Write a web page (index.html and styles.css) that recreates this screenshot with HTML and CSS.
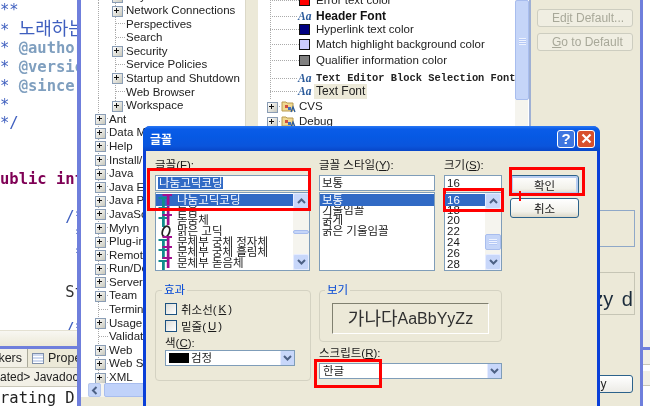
FILE: index.html
```html
<!DOCTYPE html>
<html lang="ko">
<head>
<meta charset="utf-8">
<title>글꼴</title>
<link rel="stylesheet" href="styles.css">
</head>
<body>
<svg class="defs" width="0" height="0" aria-hidden="true">
  <symbol id="tt" viewBox="0 0 15 13">
    <path d="M0.500 3h9.500v2H6.800V13H4V5H0.500z" fill="#108c8c"/>
    <path d="M4.500 0H14v2h-2.500V11H8.800V2H4.500z" fill="#a01090"/>
  </symbol>
  <symbol id="oo" viewBox="0 0 15 13">
    <ellipse cx="8" cy="6.500" rx="3.500" ry="5.500" transform="rotate(18 8 6.500)" fill="none" stroke="#222" stroke-width="1.800"/>
  </symbol>
  <symbol id="up" viewBox="0 0 9 6"><path d="M1 5l3.500-3.500L8 5" fill="none" stroke="#4d6185" stroke-width="2"/></symbol>
  <symbol id="down" viewBox="0 0 9 6"><path d="M1 1l3.500 3.500L8 1" fill="none" stroke="#4d6185" stroke-width="2"/></symbol>
  <symbol id="folder" viewBox="0 0 15 14">
    <path d="M1 3h4l1 1h6v8H1z" fill="#f0d890" stroke="#b89a50"/>
    <rect x="4" y="6" width="3" height="3" fill="#d05040"/>
    <rect x="7" y="8" width="3" height="3" fill="#4070c0"/>
    <path d="M10 13l2-5 2 5" fill="none" stroke="#2a5a9a" stroke-width="1.300"/>
  </symbol>
</svg>

<div class="screen">
  <div class="workbench">
    <pre class="editor"><span class="doc">**</span>
<span class="doc">* <span class="ko">노래하는</span></span>
<span class="doc">* <b class="tag">@author</b></span>
<span class="doc">* <b class="tag">@version</b></span>
<span class="doc">* <b class="tag">@since</b></span>
<span class="doc">*</span>
<span class="doc">*/</span>


<b class="kw">ublic int</b>

<span class="doc">       /*</span>
<span class="doc">        *</span>
<span class="doc">        *</span>

<span class="code">       St</span>

<span class="doc">       /*</span></pre>
    <div class="editor-scroll"></div>
    <div class="tabs">
      <span class="tab">kers</span>
      <span class="tab tab-props"><i class="tab-icon"></i>Prope</span>
    </div>
    <div class="crumb">ated&gt; Javadoc</div>
    <pre class="console">rating D:</pre>
  </div>

  <div class="prefs">
    <div class="tree-one">
      <div class="row nested"><i class="node exp"></i>Keys</div>
      <div class="row nested"><i class="node exp"></i>Network Connections</div>
      <div class="row nested"><i class="node"></i>Perspectives</div>
      <div class="row nested"><i class="node"></i>Search</div>
      <div class="row nested"><i class="node exp"></i>Security</div>
      <div class="row nested"><i class="node"></i>Service Policies</div>
      <div class="row nested"><i class="node exp"></i>Startup and Shutdown</div>
      <div class="row nested"><i class="node"></i>Web Browser</div>
      <div class="row nested"><i class="node exp"></i>Workspace</div>
      <div class="row"><i class="node exp"></i>Ant</div>
      <div class="row"><i class="node exp"></i>Data Management</div>
      <div class="row"><i class="node exp"></i>Help</div>
      <div class="row"><i class="node exp"></i>Install/Update</div>
      <div class="row"><i class="node exp"></i>Java</div>
      <div class="row"><i class="node exp"></i>Java EE</div>
      <div class="row"><i class="node exp"></i>Java Persistence</div>
      <div class="row"><i class="node exp"></i>JavaScript</div>
      <div class="row"><i class="node exp"></i>Mylyn</div>
      <div class="row"><i class="node exp"></i>Plug-in Development</div>
      <div class="row"><i class="node exp"></i>Remote Systems</div>
      <div class="row"><i class="node exp"></i>Run/Debug</div>
      <div class="row"><i class="node exp"></i>Server</div>
      <div class="row"><i class="node exp"></i>Team</div>
      <div class="row"><i class="node"></i>Terminal</div>
      <div class="row"><i class="node exp"></i>Usage Data</div>
      <div class="row"><i class="node"></i>Validation</div>
      <div class="row"><i class="node exp"></i>Web</div>
      <div class="row"><i class="node exp"></i>Web Services</div>
      <div class="row"><i class="node exp"></i>XML</div>
      <div class="hscroll"><span class="hbtn"><svg width="7" height="9" viewBox="0 0 6 9"><path d="M5 1L1.500 4.500 5 8" fill="none" stroke="#4d6185" stroke-width="2"/></svg></span><span class="hthumb"></span></div>
    </div>
    <div class="sash"></div>
    <div class="tree-two">
      <div class="item first"><i class="link"></i><i class="swatch red"></i>Error text color</div>
      <div class="item gap16"><i class="link short"></i><i class="aa">Aa</i><b class="bold">Header Font</b></div>
      <div class="item gap13"><i class="link"></i><i class="swatch navy"></i>Hyperlink text color</div>
      <div class="item gap15"><i class="link"></i><i class="swatch lilac"></i>Match highlight background color</div>
      <div class="item gap16"><i class="link"></i><i class="swatch grey"></i>Qualifier information color</div>
      <div class="item gap18"><i class="link short"></i><i class="aa">Aa</i><span class="mono">Text Editor Block Selection Font</span></div>
      <div class="item gap13"><i class="link short"></i><i class="aa">Aa</i><span class="picked">Text Font</span></div>
      <div class="item gap15 top"><i class="node exp"></i><svg class="folder"><use href="#folder"/></svg>CVS</div>
      <div class="item gap15 top"><i class="node exp"></i><svg class="folder"><use href="#folder"/></svg>Debug</div>
    </div>
    <div class="vscroll"><span class="vthumb"></span></div>
    <div class="side">
      <span class="off-btn"><span>Ed<u>i</u>t Default...</span></span>
      <span class="off-btn"><span><u>G</u>o to Default</span></span>
      <div class="desc-box"></div>
      <div class="sample-box"><span>the lazy d</span></div>
      <div class="apply"><span>Apply</span></div>
    </div>
  </div>

  <div class="rightedge">
    <div class="edge-top"></div>
    <div class="edge-line"></div>
    <div class="edge-row"></div>
    <div class="edge-row"></div>
  </div>

  <div class="dialog">
    <div class="titlebar">
      <span class="title">글꼴</span>
      <span class="cap help">?</span>
      <span class="cap close"><svg width="11" height="11" viewBox="0 0 11 11"><path d="M1.500 1.500l8 8M9.500 1.500l-8 8" stroke="#fff" stroke-width="2.200"/></svg></span>
    </div>
    <div class="body">
      <div class="cols">
        <div class="col c1">
          <div class="lbl">글꼴(<u>F</u>):</div>
          <div class="input"><span class="sel-text">나눔고딕코딩</span></div>
          <div class="list">
            <div class="list-rows">
              <div class="li on"><svg class="tt"><use href="#tt"/></svg>나눔고딕코딩</div>
              <div class="li"><svg class="tt"><use href="#tt"/></svg>돋움</div>
              <div class="li"><svg class="tt"><use href="#tt"/></svg>돋움체</div>
              <div class="li"><svg class="tt"><use href="#oo"/></svg>맑은 고딕</div>
              <div class="li"><svg class="tt"><use href="#tt"/></svg>문체부 궁체 정자체</div>
              <div class="li"><svg class="tt"><use href="#tt"/></svg>문체부 궁체 흘림체</div>
              <div class="li"><svg class="tt"><use href="#tt"/></svg>문체부 돋음체</div>
            </div>
            <div class="sb thumb-mid">
              <span class="sb-btn"><svg width="9" height="6"><use href="#up"/></svg></span>
              <span class="sb-thumb small"></span>
              <span class="sb-btn"><svg width="9" height="6"><use href="#down"/></svg></span>
            </div>
          </div>
        </div>
        <div class="col c2">
          <div class="lbl">글꼴 스타일(<u>Y</u>):</div>
          <div class="input">보통</div>
          <div class="list">
            <div class="list-rows plain">
              <div class="li on">보통</div>
              <div class="li">기울임꼴</div>
              <div class="li">굵게</div>
              <div class="li">굵은 기울임꼴</div>
            </div>
          </div>
        </div>
        <div class="col c3">
          <div class="lbl">크기(<u>S</u>):</div>
          <div class="input">16</div>
          <div class="list">
            <div class="list-rows plain">
              <div class="li on">16</div>
              <div class="li">18</div>
              <div class="li">20</div>
              <div class="li">22</div>
              <div class="li">24</div>
              <div class="li">26</div>
              <div class="li">28</div>
            </div>
            <div class="sb thumb-low">
              <span class="sb-btn"><svg width="9" height="6"><use href="#up"/></svg></span>
              <span class="sb-thumb big"></span>
              <span class="sb-btn"><svg width="9" height="6"><use href="#down"/></svg></span>
            </div>
          </div>
        </div>
        <div class="col c4">
          <span class="btn default">확인</span>
          <span class="btn">취소</span>
        </div>
      </div>
      <div class="lower">
        <div class="group effects">
          <div class="legend">효과</div>
          <label class="check"><i class="box"></i>취소선(<u>K</u>)</label>
          <label class="check"><i class="box"></i>밑줄(<u>U</u>)</label>
          <div class="lbl color-lbl">색(<u>C</u>):</div>
          <div class="select color-sel"><i class="chip"></i><span>검정</span><span class="drop"><svg width="9" height="6"><use href="#down"/></svg></span></div>
        </div>
        <div class="preview-col">
          <div class="group sample">
            <div class="legend">보기</div>
            <div class="sunken"><span class="big-ko">가나다</span><span class="big-en">AaBbYyZz</span></div>
          </div>
          <div class="lbl script-lbl">스크립트(<u>R</u>):</div>
          <div class="select"><span>한글</span><span class="drop"><svg width="9" height="6"><use href="#down"/></svg></span></div>
        </div>
      </div>
    </div>
  </div>

  <div class="mark m-font"></div>
  <div class="mark m-size"></div>
  <div class="mark m-ok"></div>
  <div class="mark m-script"></div>
  <div class="tick"></div>
</div>
</body>
</html>
```
FILE: styles.css
```css
* { box-sizing: border-box; }
html, body { margin: 0; padding: 0; background: #fff; }
.defs { position: absolute; }
i { font-style: normal; }

.screen {
  position: relative;
  width: 650px;
  height: 406px;
  overflow: hidden;
  background: #fff;
  font-family: "Liberation Sans", "Noto Sans CJK KR", sans-serif;
  font-size: 12px;
  color: #222;
  filter: blur(0.35px);
}

/* editor window behind */
.workbench {
  position: absolute;
  left: 0;
  top: 0;
  width: 78px;
  height: 406px;
  overflow: hidden;
}
.editor {
  margin: 0;
  height: 330px;
  padding-top: 1px;
  overflow: hidden;
  font: 15.5px/18.7px "DejaVu Sans Mono", "Noto Sans CJK KR", monospace;
  white-space: pre;
}
.doc { color: #3f5fbf; }
.ko { font-size: 18px; line-height: 18px; }
.tag { color: #7f9fbf; font-weight: 700; }
.kw { color: #7f0055; }
.code { color: #333; }
.editor-scroll { height: 16px; background: linear-gradient(#f8f7f2, #ece9d8); border-top: 1px solid #e4e1d2; }
.tabs {
  display: flex;
  height: 22px;
  border-top: 3px solid #6f7fdc;
  background: #f2f0e6;
  border-bottom: 1px solid #c9c7b8;
  line-height: 18px;
  font-size: 12.5px;
}
.tab { display: block; width: 28px; white-space: nowrap; overflow: hidden; direction: rtl; padding-right: 5px; border-right: 1px solid #aaa99a; }
.tab-props { direction: ltr; width: auto; flex: 1; padding: 0 0 0 4px; display: flex; align-items: center; background: #ece9d8; border-right: 0; }
.tab-icon {
  width: 12px;
  height: 11px;
  margin-right: 4px;
  flex: none;
  border: 1px solid #7f8faa;
  background: repeating-linear-gradient(#cfdaf0 0 2px, #fff 2px 3px);
}
.crumb { height: 19px; padding-top: 1px; background: #f2f0e6; border-bottom: 1px solid #c9c7b8; line-height: 16px; font-size: 12px; white-space: nowrap; }
.console { margin: 0; padding-top: 2px; font: 15.5px/19px "DejaVu Sans Mono", monospace; color: #222; white-space: pre; }

/* preferences window */
.prefs {
  position: absolute;
  left: 77px;
  top: 0;
  width: 566px;
  height: 406px;
  display: flex;
  background: #ece9d8;
  border-left: 4px solid #6f7fdc;
  border-right: 3px solid #6f7fdc;
  overflow: hidden;
}
.tree-one {
  position: relative;
  width: 164px;
  height: 406px;
  flex: none;
  background:
    linear-gradient(#ece9d8, #ece9d8) 0 397px / 100% 9px no-repeat,
    #fff;
  overflow: hidden;
}
.row {
  display: flex;
  align-items: center;
  height: 13.6px;
  padding-left: 14px;
  white-space: nowrap;
  font-size: 11.5px;
  background: repeating-linear-gradient(#aaa 0 1px, transparent 1px 2px) 17px 0 / 1px 100% no-repeat;
}
.row:first-child { margin-top: -10.4px; }
.nested { padding-left: 31px; background:
  repeating-linear-gradient(#aaa 0 1px, transparent 1px 2px) 17px 0 / 1px 100% no-repeat,
  repeating-linear-gradient(#aaa 0 1px, transparent 1px 2px) 34px 0 / 1px 100% no-repeat; }
.node {
  position: relative;
  display: block;
  width: 14px;
  height: 9px;
  flex: none;
  background: repeating-linear-gradient(90deg, #aaa 0 1px, transparent 1px 2px) 4px 4px / 9px 1px no-repeat;
}
.exp::before {
  content: "";
  position: absolute;
  left: 0;
  top: 0;
  width: 9px;
  height: 9px;
  border: 1px solid #8a9db5;
  background:
    linear-gradient(#111, #111) 3px 1px / 1px 5px no-repeat,
    linear-gradient(#111, #111) 1px 3px / 5px 1px no-repeat,
    linear-gradient(135deg, #fff, #c8c8bc);
}
.hscroll {
  position: absolute;
  left: 7px;
  right: 0;
  top: 383px;
  height: 14px;
  display: flex;
  gap: 3px;
  background: #f5f4ee;
}
.hbtn { width: 13px; display: flex; align-items: center; justify-content: center; background: #c5d5f8; border: 1px solid #b5c7ee; border-radius: 2px; }
.hthumb { flex: 1; background: #c0d2fa; border: 1px solid #a8bdee; border-radius: 2px; }
.sash { width: 13px; flex: none; background: #ece9d8; border-left: 1px solid #dbd8c8; }
.tree-two {
  width: 257px;
  height: 406px;
  flex: none;
  background: #fff repeating-linear-gradient(#aaa 0 1px, transparent 1px 2px) 12px 0 / 1px 100% no-repeat;
  overflow: hidden;
  font-size: 11.5px;
}
.item { display: flex; align-items: center; height: 14px; padding-left: 12px; white-space: nowrap; }
.first { margin-top: -7px; }
.gap13 { margin-top: -1px; }
.gap15 { margin-top: 1px; }
.gap16 { margin-top: 2px; }
.gap18 { margin-top: 4px; }
.top { padding-left: 9px; background: #fff; }
.link { display: block; width: 29px; height: 1px; flex: none; background: repeating-linear-gradient(90deg, #aaa 0 1px, transparent 1px 2px); }
.link.short { width: 28px; }
.swatch { display: block; width: 11px; height: 11px; flex: none; margin-right: 6px; border: 1px solid #111; }
.red { background: #f00; }
.navy { background: #000080; }
.lilac { background: #ccccff; }
.grey { background: #808080; }
.aa { font: italic 700 11.5px "Liberation Serif", serif; color: #2a5a9a; width: 18px; flex: none; }
.bold { font-weight: 700; font-size: 12px; color: #111; }
.mono { font: 10.4px/14px "Liberation Mono", monospace; color: #222; font-weight: 700; }
.picked { font-size: 12px; line-height: 15px; background: #ece9d8; padding: 0 2px; height: 15px; margin-left: -2px; color: #222; }
.folder { width: 15px; height: 14px; margin-right: 3px; flex: none; }
.vscroll { width: 14px; height: 406px; flex: none; background: #f5f4ee; border-right: 1px solid #fff; }
.vthumb {
  display: block;
  width: 14px;
  height: 100px;
  border: 1px solid #a8bdee;
  border-radius: 2px;
  background:
    repeating-linear-gradient(#eef3ff 0 1px, #b5c8f5 1px 2px) 3px 37px / 7px 7px no-repeat,
    #c5d5f8;
}
.side {
  flex: 1;
  min-width: 0;
  display: flex;
  flex-direction: column;
  align-items: flex-end;
  padding: 9px 7px 0 0;
  background: #ece9d8;
  border-left: 2px solid #9fb0d4;
}
.off-btn {
  display: block;
  width: 96px;
  height: 18px;
  margin-bottom: 6px;
  padding-left: 14px;
  border: 1px solid #cdcdc0;
  border-radius: 3px;
  color: #a8a899;
  line-height: 16px;
  font-size: 12px;
  white-space: nowrap;
  background: #f0eee2;
}
.desc-box { width: 100px; height: 37px; margin-top: 153px; margin-right: -2px; border: 1px solid #8fa8c8; }
.sample-box {
  width: 100px;
  height: 43px;
  margin-top: 25px;
  margin-right: -2px;
  border: 1px solid #c6c5b5;
  display: flex;
  justify-content: flex-end;
  align-items: flex-end;
  padding: 0 1px 1px 0;
  font-size: 20px;
  line-height: 28px;
  word-spacing: 3px;
  color: #1a2a3a;
  white-space: nowrap;
}
.apply {
  width: 78px;
  height: 18px;
  margin-top: 60px;
  padding-right: 5px;
  border: 1px solid #2c628b;
  border-radius: 3px;
  background: linear-gradient(#fff, #ecebe6);
  text-align: center;
  line-height: 16px;
}
.rightedge { position: absolute; left: 643px; top: 0; width: 7px; height: 406px; }
.edge-top { height: 347px; background: linear-gradient(#fff 0 330px, #f2f1ec 330px); }
.edge-line { height: 3px; background: #6f7fdc; }
.edge-row { height: 15px; background: #f2f0e6; border-bottom: 1px solid #c9c7b8; margin-bottom: 6px; }

/* font dialog */
.dialog {
  position: absolute;
  left: 143px;
  top: 126px;
  width: 457px;
  height: 290px;
  padding: 0 3px;
  border-radius: 7px 7px 0 0;
  background: #0a3fd8;
  font-family: "Liberation Sans", "Noto Sans CJK KR", sans-serif;
  font-size: 11.5px;
  color: #1a1a1a;
}
.titlebar {
  display: flex;
  align-items: center;
  height: 25px;
  margin: 0 -3px;
  padding: 0 5px 0 7px;
  border-radius: 7px 7px 0 0;
  background: linear-gradient(#2a78f4 0, #0a5ce8 3px, #0659e4 10px, #0a55dc 20px, #0846c8 25px);
}
.title { flex: 1; color: #fff; font-weight: 700; font-size: 12px; }
.cap {
  display: flex;
  align-items: center;
  justify-content: center;
  width: 18px;
  height: 18px;
  margin-left: 2px;
  border: 1px solid #fff;
  border-radius: 3px;
  color: #fff;
  font-weight: 700;
  font-size: 15px;
}
.help { background: #3d76e0; }
.close { background: #d8502c; }
.body { height: 265px; padding: 7px 0 0 9px; background: #ece9d8; }
.cols { display: flex; }
.col { flex: none; }
.c1 { width: 155px; margin-right: 9px; }
.c2 { width: 116px; margin-right: 9px; }
.c3 { width: 58px; margin-right: 8px; }
.c4 { width: 70px; padding-top: 17px; }
.lbl { height: 17px; line-height: 15px; white-space: nowrap; }
.input {
  height: 16px;
  padding-left: 2px;
  background: #fff;
  border: 1px solid #7f9db9;
  line-height: 14px;
  white-space: nowrap;
}
.sel-text { background: #316ac5; color: #fff; padding: 0 1px; }
.list {
  display: flex;
  height: 79px;
  margin-top: 1px;
  background: #fff;
  border: 1px solid #7f9db9;
  overflow: hidden;
}
.list-rows { flex: 1; min-width: 0; padding-top: 1px; overflow: hidden; }
.li {
  display: flex;
  align-items: center;
  height: 10.7px;
  padding-left: 2px;
  white-space: nowrap;
  line-height: 11px;
  color: #1a1a1a;
}
.plain .li { height: 10.8px; }
.li.on { height: 12px; margin-bottom: -1.3px; background: #316ac5; color: #fff; position: relative; z-index: 1; }
.tt { width: 15px; height: 13px; margin-right: 4px; flex: none; }
.sb {
  flex: none;
  width: 16px;
  display: flex;
  flex-direction: column;
  justify-content: space-between;
  background: #f5f4ee;
}
.sb-btn {
  display: flex;
  align-items: center;
  justify-content: center;
  height: 16px;
  flex: none;
  background: #c8d7fa;
  border: 1px solid #e6ecff;
  border-radius: 2px;
}
.sb-thumb { display: block; background: #c5d5f8; border: 1px solid #a8bdee; border-radius: 2px; }
.sb-thumb.small { height: 4px; }
.sb-thumb.big { height: 16px; margin-top: 14px; margin-bottom: -6px;
  background: repeating-linear-gradient(#eef3ff 0 1px, #b5c8f5 1px 2px) 3px 4px / 8px 6px no-repeat, #c5d5f8; }
.btn {
  display: flex;
  align-items: center;
  justify-content: center;
  width: 69px;
  height: 20px;
  margin-bottom: 3px;
  border: 1px solid #2c628b;
  border-radius: 3px;
  background: linear-gradient(#fff, #f2f1ea 70%, #dcd8c8);
}
.btn.default { box-shadow: inset 0 0 0 2px #b8cef2; }
.lower { display: flex; gap: 8px; margin-top: 19px; }
.group { border: 1px solid #d4d2c2; border-radius: 4px; }
.legend {
  width: fit-content;
  margin: -8px 0 0 -3px;
  padding: 0 2px;
  height: 14px;
  line-height: 14px;
  background: #ece9d8;
  color: #0046d5;
}
.effects { width: 156px; height: 91px; padding-left: 9px; }
.check { display: flex; align-items: center; gap: 2px; height: 13px; margin-top: 6px; margin-bottom: -2px; white-space: nowrap; }
.effects .legend + .check { margin-top: 5px; }
.box {
  display: block;
  width: 12px;
  height: 12px;
  margin-right: 2px;
  border: 1px solid #1c5180;
  background: linear-gradient(135deg, #dcdcd7, #fff);
}
.color-lbl { height: 14px; margin-top: 6px; line-height: 14px; }
.select {
  display: flex;
  align-items: center;
  height: 16px;
  padding-left: 3px;
  background: #fff;
  border: 1px solid #7f9db9;
  line-height: 14px;
  white-space: nowrap;
}
.select > span:first-of-type { flex: 1; }
.color-sel { width: 130px; }
.chip { display: block; width: 20px; height: 10px; margin-right: 2px; background: #000; }
.select > .drop {
  flex: none;
  display: flex;
  align-items: center;
  justify-content: center;
  width: 14px;
  height: 14px;
  background: #c8d7fa;
  border-left: 1px solid #e6ecff;
}
.preview-col { width: 183px; }
.sample { height: 52px; padding-left: 12px; }
.sample .legend { margin-left: -7px; }
.sunken {
  display: flex;
  align-items: center;
  justify-content: center;
  width: 157px;
  height: 31px;
  margin-top: 6px;
  border: 1px solid #fff;
  border-top-color: #808070;
  border-left-color: #808070;
  color: #303030;
  white-space: nowrap;
}
.big-ko { font-size: 18px; line-height: 26px; }
.big-en { font-size: 16px; line-height: 26px; }
.script-lbl { height: 14px; margin-top: 4px; line-height: 14px; margin-bottom: 3px; }

/* hand-drawn red annotations over the screenshot */
.mark { position: absolute; border: 3px solid #f00; }
.m-font { left: 147px; top: 168px; width: 164px; height: 43px; }
.m-size { left: 443px; top: 188px; width: 61px; height: 24px; }
.m-ok { left: 509px; top: 167px; width: 76px; height: 29px; }
.m-script { left: 314px; top: 359px; width: 68px; height: 29px; }
.tick { position: absolute; left: 519px; top: 191px; width: 2px; height: 10px; background: #f00; }
```
